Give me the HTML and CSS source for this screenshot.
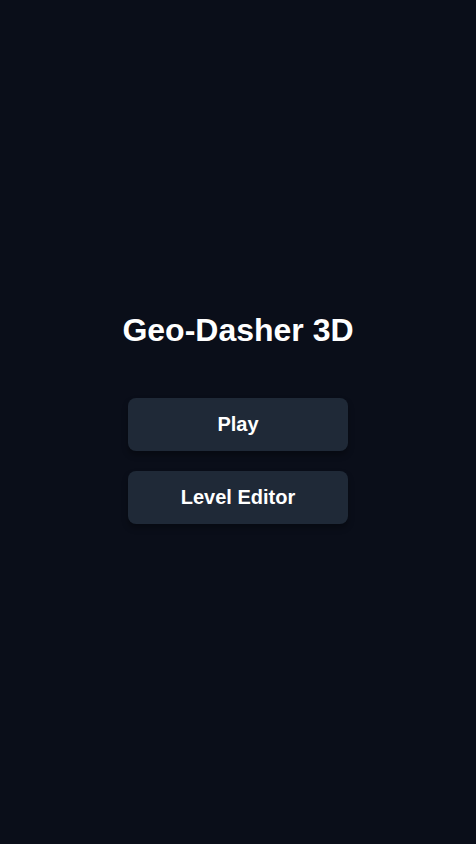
FILE: index.html
```html
<!DOCTYPE html>
<html>
<head>
<meta charset="utf-8">
<link rel="stylesheet" href="styles.css">
</head>
<body>
<main class="screen">
  <h1 class="title">Geo-Dasher 3D</h1>
  <div class="menu">
    <button class="btn">Play</button>
    <button class="btn">Level Editor</button>
  </div>
</main>
</body>
</html>
```
FILE: styles.css
```css
html, body { margin: 0; padding: 0; }
body {
  background: #0a0e19;
  font-family: "Liberation Sans", Arial, sans-serif;
  color: #ffffff;
}
.screen {
  min-height: 844px;
  box-sizing: border-box;
  padding-bottom: 8px;
  display: flex;
  flex-direction: column;
  align-items: center;
  justify-content: center;
}
.title {
  margin: 0 0 50px 0;
  font-size: 32px;
  line-height: 36px;
  font-weight: 700;
}
.menu {
  display: flex;
  flex-direction: column;
  gap: 20px;
}
.btn {
  width: 220px;
  height: 53px;
  border: none;
  border-radius: 8px;
  background: #1f2937;
  color: #ffffff;
  font-family: "Liberation Sans", Arial, sans-serif;
  font-size: 20px;
  font-weight: 700;
  box-shadow: 0 4px 6px rgba(0,0,0,0.3);
  cursor: pointer;
}
```
